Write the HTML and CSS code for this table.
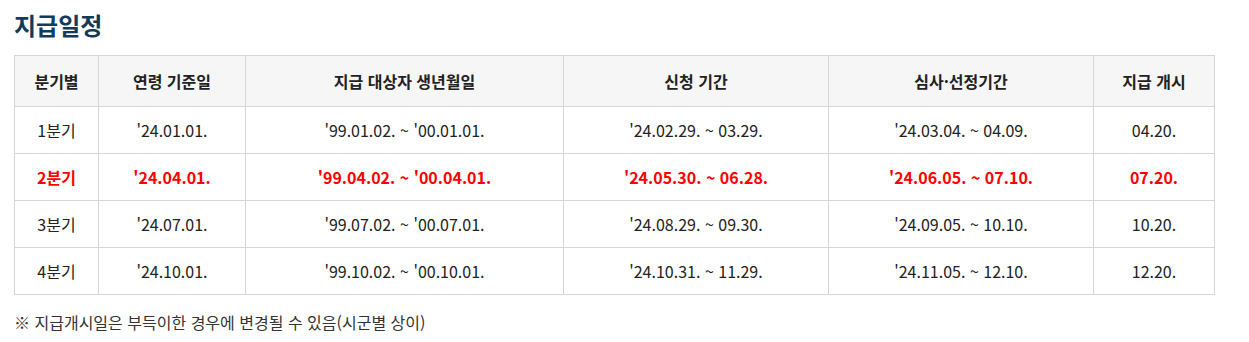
FILE: index.html
```html
<!DOCTYPE html>
<html lang="ko">
<head>
<meta charset="utf-8">
<link rel="stylesheet" href="styles.css">
</head>
<body>
<div class="wrap">
  <h3 class="title">지급일정</h3>
  <table class="sched">
    <colgroup>
      <col class="c1"><col class="c2"><col class="c3"><col class="c4"><col class="c5"><col class="c6">
    </colgroup>
    <thead>
      <tr><th>분기별</th><th>연령 기준일</th><th>지급 대상자 생년월일</th><th>신청 기간</th><th>심사·선정기간</th><th>지급 개시</th></tr>
    </thead>
    <tbody>
      <tr><td>1분기</td><td>'24.01.01.</td><td>'99.01.02. ~ '00.01.01.</td><td>'24.02.29. ~ 03.29.</td><td>'24.03.04. ~ 04.09.</td><td>04.20.</td></tr>
      <tr class="hl"><td>2분기</td><td>'24.04.01.</td><td>'99.04.02. ~ '00.04.01.</td><td>'24.05.30. ~ 06.28.</td><td>'24.06.05. ~ 07.10.</td><td>07.20.</td></tr>
      <tr><td>3분기</td><td>'24.07.01.</td><td>'99.07.02. ~ '00.07.01.</td><td>'24.08.29. ~ 09.30.</td><td>'24.09.05. ~ 10.10.</td><td>10.20.</td></tr>
      <tr><td>4분기</td><td>'24.10.01.</td><td>'99.10.02. ~ '00.10.01.</td><td>'24.10.31. ~ 11.29.</td><td>'24.11.05. ~ 12.10.</td><td>12.20.</td></tr>
    </tbody>
  </table>
  <p class="note">※ 지급개시일은 부득이한 경우에 변경될 수 있음(시군별 상이)</p>
</div>
</body>
</html>
```
FILE: styles.css
```css
html, body { margin: 0; padding: 0; background: #fff; }
body {
  font-family: "Noto Sans CJK KR", "Noto Sans", sans-serif;
  color: #222;
}
.wrap { padding: 0 14px; }
.title {
  margin: 0;
  padding-top: 9px;
  height: 55px;
  box-sizing: border-box;
  font-size: 24px;
  line-height: 32px;
  font-weight: 700;
  color: #143a5a;
}
.sched {
  width: 1200px;
  border-collapse: collapse;
  table-layout: fixed;
  font-size: 16px;
}
.c1 { width: 84px; }
.c2 { width: 147px; }
.c3 { width: 318px; }
.c4 { width: 265px; }
.c5 { width: 265px; }
.c6 { width: 121px; }
.sched th, .sched td {
  border: 1px solid #d6d6d6;
  text-align: center;
  padding: 0;
}
.sched th {
  background: #f6f6f6;
  height: 50px;
  font-weight: 700;
  color: #222;
}
.sched td {
  height: 46px;
  color: #222;
}
.sched tr.hl td {
  color: #ff0000;
  font-weight: 700;
}
.note {
  margin: 15px 0 0;
  font-size: 16px;
  color: #333;
}
```
